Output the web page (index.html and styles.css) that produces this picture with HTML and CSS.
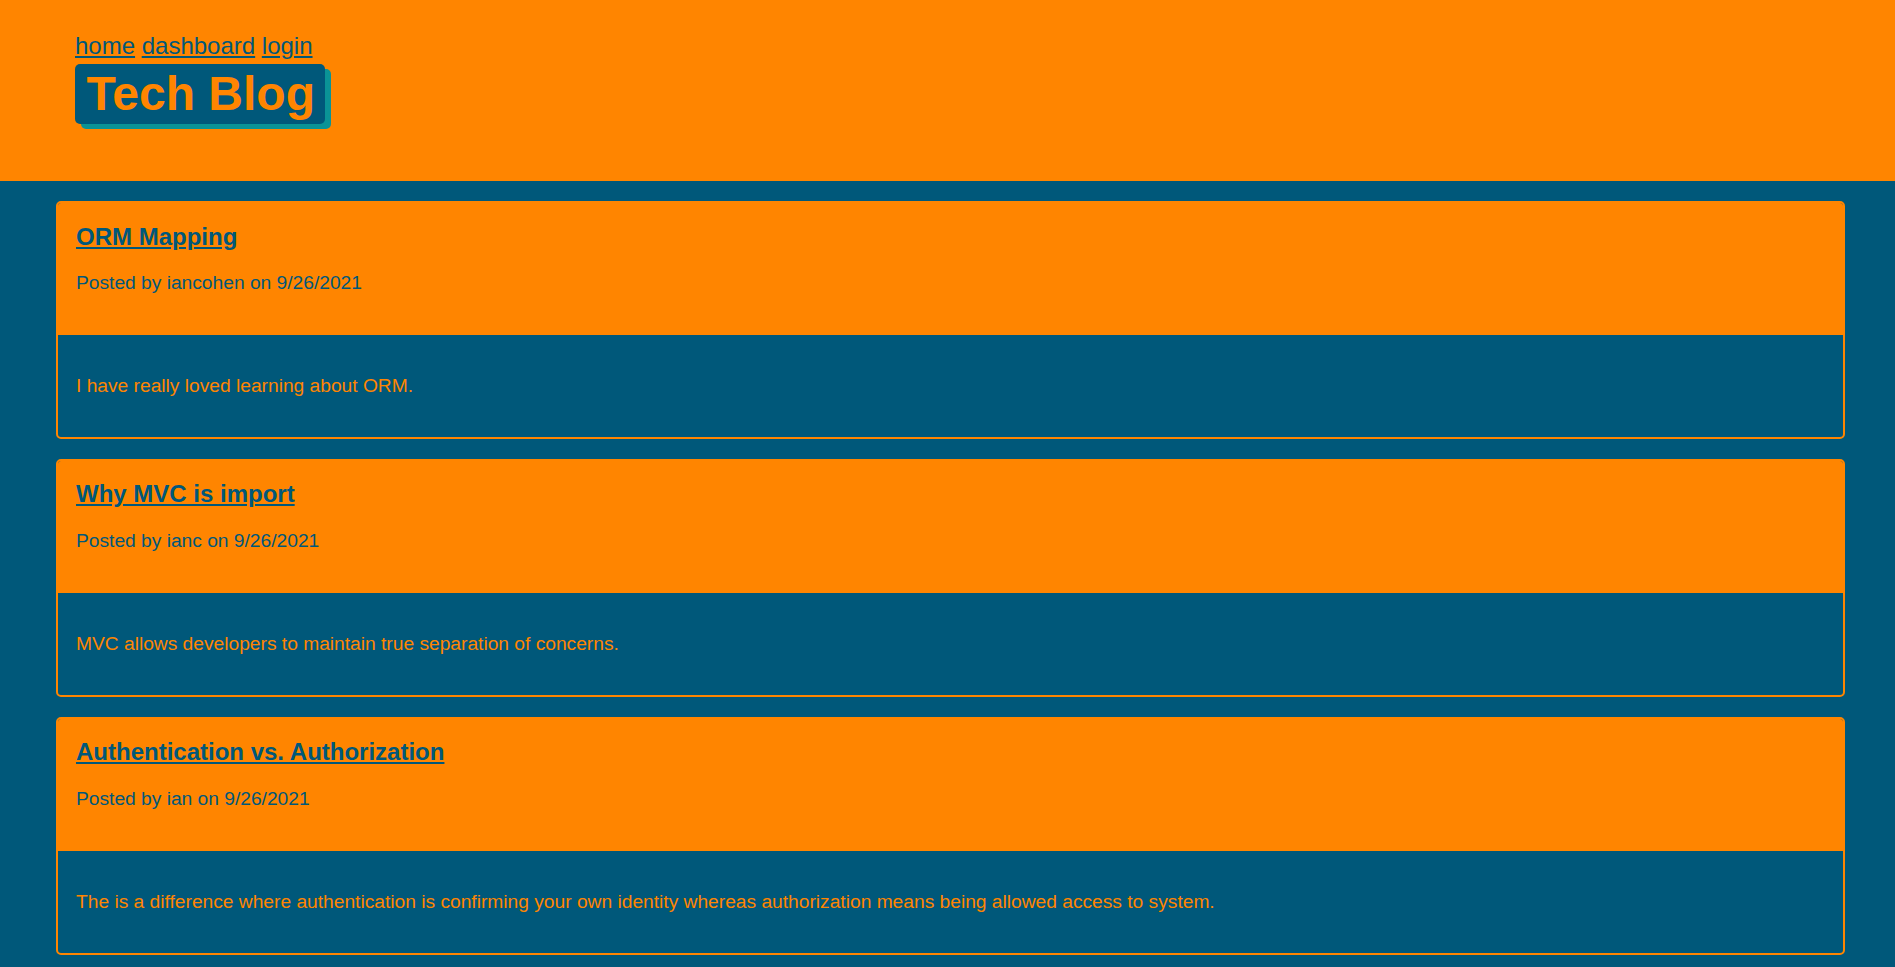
FILE: index.html
```html
<!DOCTYPE html>
<html lang="en">
<head>
<meta charset="utf-8">
<title>Tech Blog</title>
<link rel="stylesheet" href="styles.css">
</head>
<body>
<header class="site-header">
  <nav class="nav">
    <a href="#">home</a>
    <a href="#">dashboard</a>
    <a href="#">login</a>
  </nav>
  <h1 class="brand">Tech Blog</h1>
</header>
<main class="posts">
  <article class="post">
    <div class="post-head">
      <h2 class="post-title"><a href="#">ORM Mapping</a></h2>
      <p class="post-meta">Posted by iancohen on 9/26/2021</p>
    </div>
    <div class="post-body">
      <p>I have really loved learning about ORM.</p>
    </div>
  </article>
  <article class="post">
    <div class="post-head">
      <h2 class="post-title"><a href="#">Why MVC is import</a></h2>
      <p class="post-meta">Posted by ianc on 9/26/2021</p>
    </div>
    <div class="post-body">
      <p>MVC allows developers to maintain true separation of concerns.</p>
    </div>
  </article>
  <article class="post">
    <div class="post-head">
      <h2 class="post-title"><a href="#">Authentication vs. Authorization</a></h2>
      <p class="post-meta">Posted by ian on 9/26/2021</p>
    </div>
    <div class="post-body">
      <p>The is a difference where authentication is confirming your own identity whereas authorization means being allowed access to system.</p>
    </div>
  </article>
</main>
</body>
</html>
```
FILE: styles.css
```css
html, body {
  margin: 0;
  padding: 0;
}

body {
  background: #00587a;
  font-family: "Liberation Sans", Arial, sans-serif;
  color: #00587a;
}

.site-header {
  background: #ff8500;
  height: 181px;
  box-sizing: border-box;
  padding: 32px 0 0 75px;
}

.nav {
  font-size: 24px;
  line-height: 27.6px;
}

.nav a {
  color: #00587a;
  text-decoration: underline;
}

.brand {
  display: inline-block;
  margin: 4px 0 0;
  padding: 2px 10px 3px 11.5px;
  font-size: 48px;
  line-height: 55px;
  font-weight: bold;
  color: #ff8500;
  background: #00587a;
  border-radius: 5px;
  box-shadow: 6px 5px 0 #0a9396;
}

.posts {
  padding: 20px 50px 20px 56px;
}

.post {
  border: 2px solid #ff8500;
  border-radius: 5px;
  overflow: hidden;
  margin-bottom: 20px;
}

.post-head {
  background: #ff8500;
  margin: -2px -2px 0;
  padding: 21.5px 18px 40.5px 20px;
}

.post-title {
  margin: 0 0 22.4px;
  font-size: 24px;
  line-height: 27.6px;
  font-weight: bold;
}

.post-title a {
  color: #00587a;
  text-decoration: underline;
}

.post-meta {
  margin: 0;
  font-size: 19.2px;
  line-height: 22px;
  color: #00587a;
}

.post-body {
  padding: 40px 18px;
}

.post-body p {
  margin: 0;
  font-size: 19.2px;
  line-height: 22px;
  color: #ff8500;
}
```
